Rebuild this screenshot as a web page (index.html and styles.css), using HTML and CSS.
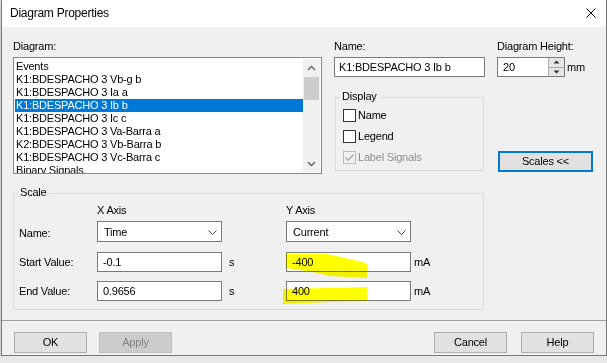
FILE: index.html
```html
<!DOCTYPE html>

<html>
  <head>
    <title>Diagram Properties</title>
    <meta charset="utf-8" />
    <meta name="viewport" content="width=device-width, initial-scale=1" />
    <link rel="stylesheet" href="styles.css">
  </head>
  <body>
    <div class="window">
      <header class="titlebar">
        <span class="title">Diagram Properties</span>
        <svg class="close" width="10" height="10" viewBox="0 0 10 10">
          <path d="M0.5 0.5 L9.5 9.5 M9.5 0.5 L0.5 9.5" stroke="#000" stroke-width="1" fill="none"/>
        </svg>
      </header>

      <main class="content">
        <div class="top">
          <div class="col col-diagram">
            <div class="caption">Diagram:</div>
            <div class="listbox">
              <ul class="items">
                <li>Events</li>
                <li>K1:BDESPACHO 3 Vb-g b</li>
                <li>K1:BDESPACHO 3 Ia a</li>
                <li class="selected">K1:BDESPACHO 3 Ib b</li>
                <li>K1:BDESPACHO 3 Ic c</li>
                <li>K1:BDESPACHO 3 Va-Barra a</li>
                <li>K2:BDESPACHO 3 Vb-Barra b</li>
                <li>K1:BDESPACHO 3 Vc-Barra c</li>
                <li>Binary Signals</li>
              </ul>
              <div class="vscroll">
                <div class="arrow">
                  <svg width="9" height="6" viewBox="0 0 9 6"><path d="M1 5 L4.5 1.5 L8 5" stroke="#606060" stroke-width="1.4" fill="none"/></svg>
                </div>
                <div class="thumb"></div>
                <div class="track"></div>
                <div class="arrow">
                  <svg width="9" height="6" viewBox="0 0 9 6"><path d="M1 1 L4.5 4.5 L8 1" stroke="#606060" stroke-width="1.4" fill="none"/></svg>
                </div>
              </div>
            </div>
          </div>

          <div class="col col-name">
            <div class="caption">Name:</div>
            <div class="textbox name-box">K1:BDESPACHO 3 Ib b</div>
            <div class="group display">
              <span class="legend">Display</span>
              <div class="check"><span class="box"></span>Name</div>
              <div class="check"><span class="box"></span>Legend</div>
              <div class="check disabled">
                <span class="box">
                  <svg width="11" height="11" viewBox="0 0 11 11"><path d="M1.5 5.5 L4.2 8.2 L9.5 2.5" stroke="#a8a8a8" stroke-width="1.4" fill="none"/></svg>
                </span>Label Signals
              </div>
            </div>
          </div>

          <div class="col col-height">
            <div class="caption">Diagram Height:</div>
            <div class="spin-row">
              <div class="textbox spin">
                <span>20</span>
                <span class="spin-btns">
                  <span class="spin-up">
                    <svg width="7" height="4" viewBox="0 0 7 4"><path d="M0.5 3.5 L3.5 0.5 L6.5 3.5 Z" fill="#333"/></svg>
                  </span>
                  <span class="spin-down">
                    <svg width="7" height="4" viewBox="0 0 7 4"><path d="M0.5 0.5 L3.5 3.5 L6.5 0.5 Z" fill="#333"/></svg>
                  </span>
                </span>
              </div>
              <span class="unit-mm">mm</span>
            </div>
            <button class="btn scales">Scales &lt;&lt;</button>
          </div>
        </div>

        <div class="group scale">
          <span class="legend">Scale</span>

          <div class="scale-row scale-head">
            <span></span>
            <span>X Axis</span>
            <span></span>
            <span>Y Axis</span>
            <span></span>
          </div>

          <div class="scale-row names">
            <span class="row-label">Name:</span>
            <div class="combo">
              <span>Time</span>
              <svg width="9" height="5" viewBox="0 0 9 5"><path d="M0.5 0.5 L4.5 4.5 L8.5 0.5" stroke="#444" stroke-width="1" fill="none"/></svg>
            </div>
            <span></span>
            <div class="combo">
              <span>Current</span>
              <svg width="9" height="5" viewBox="0 0 9 5"><path d="M0.5 0.5 L4.5 4.5 L8.5 0.5" stroke="#444" stroke-width="1" fill="none"/></svg>
            </div>
            <span></span>
          </div>

          <div class="scale-row start">
            <span class="row-label">Start Value:</span>
            <div class="textbox">-0.1</div>
            <span class="unit-s">s</span>
            <div class="textbox">-400</div>
            <span class="unit-ma">mA</span>
          </div>

          <div class="scale-row end">
            <span class="row-label">End Value:</span>
            <div class="textbox">0.9656</div>
            <span class="unit-s">s</span>
            <div class="textbox">400</div>
            <span class="unit-ma">mA</span>
          </div>

          <!-- highlighter marks over the Y values -->
          <svg class="marker" width="471" height="117" viewBox="0 0 471 117">
            <polygon points="273,61 314,61 332,65 350,69 354,71 354,85 317,83 300,79 287,77 273,75" fill="#ffff00"/>
            <polygon points="270,96 354,94 354,108 317,109 270,111" fill="#ffff00"/>
          </svg>
        </div>
      </main>

      <footer class="buttons">
        <div class="btn-group">
          <button class="btn">OK</button>
          <button class="btn" disabled>Apply</button>
        </div>
        <div class="btn-group right">
          <button class="btn">Cancel</button>
          <button class="btn">Help</button>
        </div>
      </footer>
    </div>
  </body>
</html>
```

FILE: styles.css
```css
body {
  margin: 0;
  background-color: #e8e8e8;
  font-family: "Liberation Sans", Arial, sans-serif;
  font-size: 11px;
  line-height: 13px;
  letter-spacing: -0.2px;
  color: #000;
}

.window {
  width: 606px;
  height: 356px;
  margin-left: 1px;
  box-sizing: border-box;
  border: 1px solid #777;
  border-top: 0;
  background-color: #f0f0f0;
  box-shadow: 0 3px 7px rgba(0, 0, 0, 0.22);
  display: flex;
  flex-direction: column;
}

/* title bar */
.titlebar {
  height: 27px;
  flex: none;
  background-color: #fff;
  display: flex;
  align-items: center;
  padding-left: 8px;
}

.title {
  font-size: 12px;
  letter-spacing: -0.25px;
  line-height: 26px;
  height: 27px;
}

.close {
  margin-left: auto;
  margin-right: 10px;
  margin-top: -1px;
}

/* dialog body */
.content {
  flex: none;
  padding: 13px 0 10px 11px;
}

.top {
  display: flex;
  gap: 12px;
}

.col {
  display: flex;
  flex-direction: column;
}

.caption {
  height: 13px;
  margin-bottom: 4px;
  white-space: nowrap;
}

.col-diagram {
  width: 309px;
}

.col-name {
  width: 151px;
}

.col-height {
  width: 97px;
}

.listbox {
  width: 309px;
  height: 117px;
  box-sizing: border-box;
  border: 1px solid #828790;
  background-color: #fff;
  padding: 1px;
  display: flex;
  overflow: hidden;
}

.items {
  width: 288px;
  flex: none;
  margin: 0;
  padding: 1px 0 0 0;
  list-style: none;
}

.items li {
  height: 13px;
  padding-left: 1px;
  white-space: nowrap;
}

.items li.selected {
  background-color: #0078d7;
  color: #fff;
}

.vscroll {
  width: 17px;
  flex: none;
  background-color: #f0f0f0;
  display: flex;
  flex-direction: column;
}

.vscroll .arrow {
  height: 17px;
  flex: none;
  display: flex;
  align-items: center;
  justify-content: center;
}

.vscroll .thumb {
  height: 23px;
  margin: 1px 1px 0 1px;
  background-color: #cdcdcd;
}

.vscroll .track {
  flex: 1;
}

.textbox {
  height: 20px;
  box-sizing: border-box;
  border: 1px solid #7a7a7a;
  background-color: #fff;
  padding-left: 5px;
  display: flex;
  align-items: center;
  white-space: nowrap;
}

.name-box {
  padding-left: 4px;
}

/* group boxes */
.group {
  position: relative;
  box-sizing: border-box;
  border: 1px solid #dcdcdc;
}

.group .legend {
  position: absolute;
  top: -8px;
  left: 4px;
  padding: 0 2px;
  background-color: #f0f0f0;
}

.display {
  margin: 20px 1px 0 1px;
  padding: 11px 7px 6px 7px;
  display: flex;
  flex-direction: column;
  gap: 8px;
}

.check {
  height: 13px;
  display: flex;
  align-items: center;
  gap: 2px;
  white-space: nowrap;
}

.check .box {
  width: 13px;
  height: 13px;
  box-sizing: border-box;
  border: 1px solid #333;
  background-color: #fff;
  display: flex;
}

.check.disabled {
  color: #8d8d8d;
}

.check.disabled .box {
  border-color: #bcbcbc;
  background-color: #f0f0f0;
}

/* diagram height spinner */
.spin-row {
  display: flex;
  align-items: center;
}

.spin {
  width: 68px;
  padding-right: 0;
}

.spin-btns {
  margin-left: auto;
  width: 16px;
  height: 18px;
  box-sizing: border-box;
  border-left: 1px solid #adadad;
  background-color: #e6e6e6;
  display: flex;
  flex-direction: column;
}

.spin-up,
.spin-down {
  flex: 1;
  display: flex;
  align-items: center;
  justify-content: center;
}

.spin-up {
  border-bottom: 1px solid #adadad;
}

.unit-mm {
  margin-left: 2px;
}

/* buttons */
.btn {
  width: 73px;
  height: 21px;
  box-sizing: border-box;
  padding: 0;
  border: 1px solid #adadad;
  background-color: #e1e1e1;
  color: #000;
  font: inherit;
  letter-spacing: inherit;
}

.btn:disabled {
  background-color: #cccccc;
  border-color: #bfbfbf;
  color: #838383;
}

.scales {
  width: 95px;
  margin: 74px 0 0 1px;
  border: 2px solid #0078d7;
}

/* scale group */
.scale {
  width: 471px;
  height: 117px;
  margin-top: 19px;
  padding: 10px 0 0 5px;
}

.scale-row {
  display: grid;
  grid-template-columns: 78px 125px 64px 125px auto;
  align-items: center;
}

.scale-head {
  height: 13px;
  margin-bottom: 4px;
}

.names {
  height: 21px;
}

.start {
  height: 20px;
  margin-top: 10px;
}

.end {
  height: 20px;
  margin-top: 9px;
}

.row-label {
  padding-top: 1px;
  white-space: nowrap;
}

.names .row-label {
  padding-top: 3px;
}

.combo {
  height: 21px;
  box-sizing: border-box;
  border: 1px solid #7a7a7a;
  background-color: #fff;
  padding: 1px 4px 0 6px;
  display: flex;
  align-items: center;
  justify-content: space-between;
}

.unit-s {
  padding-left: 7px;
}

.unit-ma {
  padding-left: 3px;
}

.marker {
  position: absolute;
  left: -1px;
  top: -1px;
  pointer-events: none;
  mix-blend-mode: multiply;
}

/* bottom button bar */
.buttons {
  flex: none;
  border-top: 1px solid #a0a0a0;
  padding: 11px 12px 2px 12px;
  display: flex;
  justify-content: space-between;
}

.btn-group {
  display: flex;
  gap: 12px;
}

.btn-group.right {
  gap: 14px;
}
```
